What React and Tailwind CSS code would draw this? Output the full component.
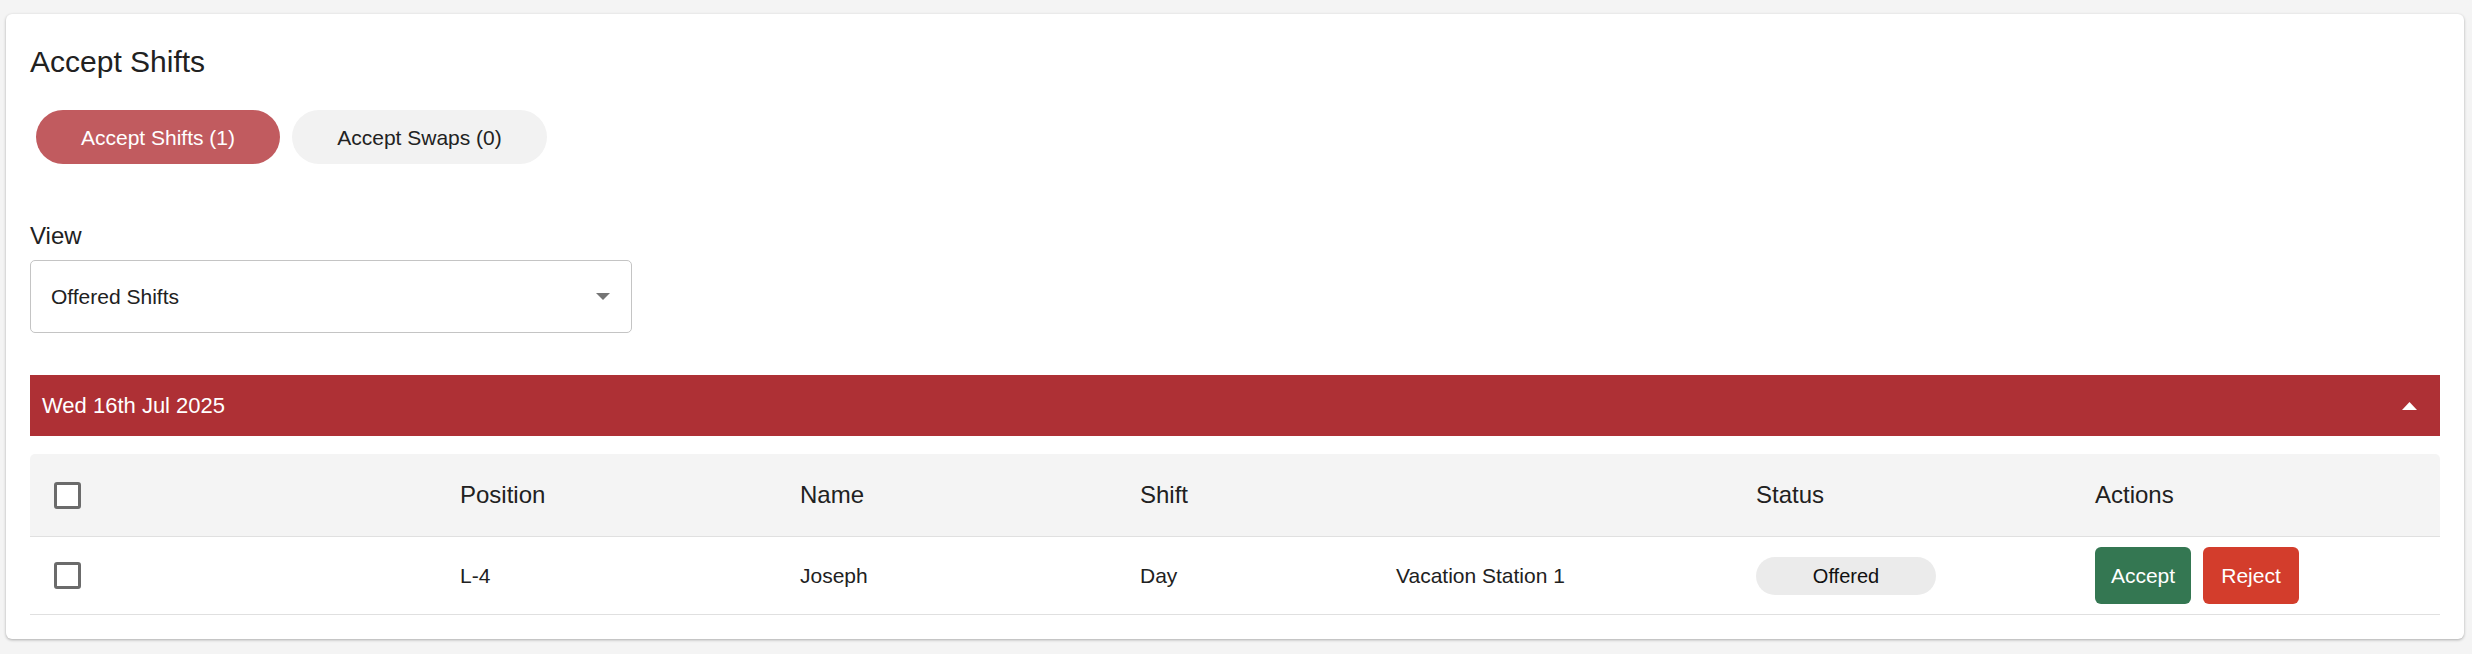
import { useState } from "react";

const cols = "grid grid-cols-[430px_340px_340px_256px_360px_339px_1fr]";

const Checkbox = () => (
  <span className="block w-[27px] h-[27px] rounded-[3px] border-[3px] border-[#6b6b6b] bg-white" />
);

export default function App() {
  const [tab, setTab] = useState(0);

  const rows = [
    { position: "L-4", name: "Joseph", shift: "Day", station: "Vacation Station 1", status: "Offered" },
  ];

  return (
    <div className="min-h-[654px] bg-[#f4f4f4] pt-[14px] px-[6px] font-['Liberation_Sans',Arial,sans-serif] text-[#212121]">
      <div className="bg-white rounded-[6px] shadow-[0_1px_3px_rgba(0,0,0,0.3)] w-[2458px] px-[24px] pt-[30px] pb-[24px]">
        <h1 className="text-[30px] leading-[36px] font-normal">Accept Shifts</h1>

        <div className="flex gap-[12px] mt-[30px] pl-[6px]">
          <button
            onClick={() => setTab(0)}
            className="h-[54px] w-[244px] rounded-full bg-[#c15b5f] text-white text-[21px] leading-none"
          >
            Accept Shifts (1)
          </button>
          <button
            onClick={() => setTab(1)}
            className="h-[54px] w-[255px] rounded-full bg-[#f2f2f2] text-[#222] text-[21px] leading-none"
          >
            Accept Swaps (0)
          </button>
        </div>

        <div className="mt-[58px] text-[24px] leading-[28px]">View</div>
        <div className="mt-[10px] w-[602px] h-[73px] border border-[#c4c4c4] rounded-[5px] flex items-center justify-between pl-[20px] pr-[21px]">
          <span className="text-[21px] leading-none">Offered Shifts</span>
          <svg width="14" height="7" viewBox="0 0 14 7">
            <path d="M0 0 L14 0 L7 7 Z" fill="#757575" />
          </svg>
        </div>

        <div className="mt-[42px] h-[61px] bg-[#ae3035] flex items-center justify-between pl-[12px] pr-[23px]">
          <span className="text-white text-[22px] leading-none">Wed 16th Jul 2025</span>
          <svg width="15" height="8" viewBox="0 0 15 8">
            <path d="M0 8 L15 8 L7.5 0 Z" fill="#ffffff" />
          </svg>
        </div>

        <div className="mt-[18px]">
          <div className={`${cols} h-[83px] items-center bg-[#f4f4f4] rounded-t-[5px] border-b border-[#e0e0e0] text-[24px]`}>
            <div className="pl-[24px]">
              <Checkbox />
            </div>
            <div>Position</div>
            <div>Name</div>
            <div>Shift</div>
            <div></div>
            <div>Status</div>
            <div>Actions</div>
          </div>

          {rows.map((r, i) => (
            <div key={i} className={`${cols} h-[78px] items-center border-b border-[#e0e0e0] text-[21px]`}>
              <div className="pl-[24px]">
                <Checkbox />
              </div>
              <div>{r.position}</div>
              <div>{r.name}</div>
              <div>{r.shift}</div>
              <div>{r.station}</div>
              <div>
                <span className="flex items-center justify-center w-[180px] h-[38px] rounded-full bg-[#ebebeb] text-[20px] text-[#111]">
                  {r.status}
                </span>
              </div>
              <div className="flex gap-[12px]">
                <button className="w-[96px] h-[57px] rounded-[6px] bg-[#347752] text-white text-[21px]">Accept</button>
                <button className="w-[96px] h-[57px] rounded-[6px] bg-[#d33d2c] text-white text-[21px]">Reject</button>
              </div>
            </div>
          ))}
        </div>
      </div>
    </div>
  );
}
